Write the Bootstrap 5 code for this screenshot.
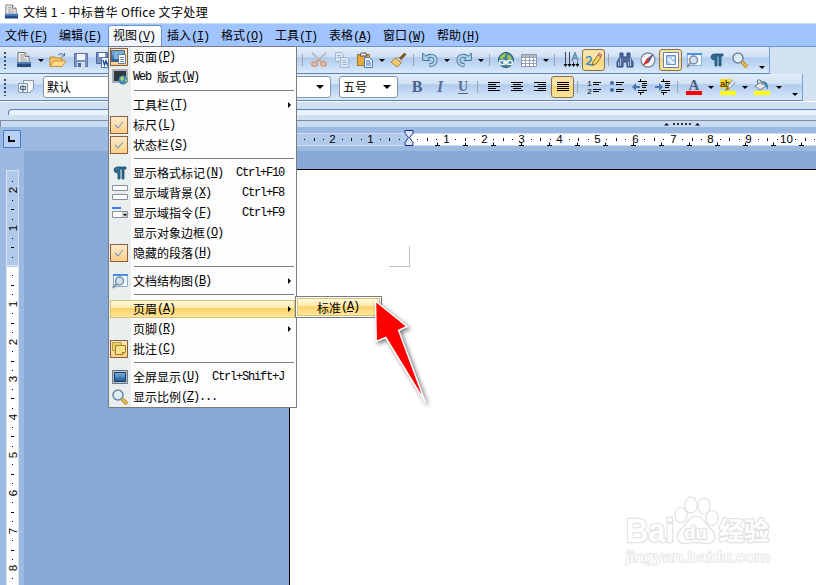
<!DOCTYPE html>
<html lang="zh-CN">
<head>
<meta charset="utf-8">
<title>文档 1 - 中标普华 Office 文字处理</title>
<link href="https://cdn.jsdelivr.net/npm/bootstrap@5.3.0/dist/css/bootstrap.min.css" rel="stylesheet">
<style>
body{width:816px;height:585px;overflow:hidden;background:#87a9d6;color:#000;font:12px/20px "Noto Sans CJK SC","Liberation Sans",sans-serif}
svg{display:block;flex:none}
.titlebar{height:23px;padding-left:4px;gap:4px;background:#fff;line-height:23px}
.titlebar span{white-space:pre;letter-spacing:.36px}
.lt{font-family:"Liberation Mono","Noto Sans CJK SC",monospace;font-size:12px;letter-spacing:-1.2px;white-space:pre}
.menubar{height:24px;background:#a0c4ff;border-top:1px solid #c8dcfa;border-bottom:1px solid #6f94cc;padding:1px 0 0 0}
.menubar .mi{padding:0 6px 0 5px;width:54px;height:22px;line-height:20px;white-space:nowrap}
.menubar .mi.open{background:linear-gradient(#fff,#e9f2fd);border:1px solid #6a93cf;border-bottom:0;border-radius:3px 3px 0 0;padding-left:4px;line-height:18px}
.bars{background:#d2e2f3}
.bar1,.bar2{height:27px;background:linear-gradient(#e3edf9 0,#d0e0f4 39%,#b0cbee 41%,#c0d7f3 65%,#dbeafc 100%);border-bottom:1px solid #5d83bd;border-right:1px solid #7ca0d4}
.bar1{width:770px}.bar2{width:803px}
.grip{width:12px;height:17px;flex:none;background:repeating-linear-gradient(#3c4f6e 0 2px,transparent 2px 4px) 4px 0/2px 100% no-repeat}
.bar2 .grip{width:14px}
.tb{width:23px;height:22px;flex:none;display:flex;align-items:center;justify-content:center}
.tb svg{overflow:visible}
.tb.on{border:1px solid #8c7048;border-radius:3px;background:linear-gradient(#f8dfa4,#fbe6b0 40%,#f8d27a 45%,#fbe598)}
.dd{width:11px;flex:none;display:flex;justify-content:center}
.dd:before,.combo:after{content:"";border:3px solid transparent;border-top-color:#000;border-bottom:0}
.combo:after{border-width:4px 4px 0;margin-left:auto}
.sp{width:8px;height:12px;flex:none;background:linear-gradient(#9ba3ad,#9ba3ad) 3px 0/1px 100% no-repeat}
.under{width:184px;flex:none}
.combo{height:22px;border:1px solid #8494ab;border-radius:3px;background:#fff;flex:none;padding:0 6px 0 3px}
.c1{width:288px;margin:0 8px 0 6px}.c2{width:59px;margin-right:7px}
.end{margin:14px 2px 0 auto}
.strip{height:20px;background:#cfe0f2;border-top:1px solid #fff;border-bottom:1px solid #7e8ba0;padding:7px 0 0 8px}
.tube{height:6px;border:1px solid #5f80b8;border-right:0;border-bottom:0;border-radius:4px 0 0 0;background:#eaf2fb}
.split{height:6px;background:#c9dcf1;border-left:1px solid #7e8ba0}
.work{height:458px}
.vr-pane{width:24px;flex:none;background:#9bb9e1}
.hr-top{height:24px;background:#9bb9e1}
.sheet{margin:18px 0 0 265px;height:420px;background:#fff;border-left:1px solid #000;border-top:1px solid #000}
.popmenu{position:absolute;left:108px;top:46px;width:189px;height:362px;border:1px solid #7b7b7b;background:linear-gradient(90deg,#e9eeee 22px,#fdfdfd 22px)}
.it{height:20px;padding:0 12px 0 0;flex:none;white-space:nowrap}
.ic{width:24px;height:18px;flex:none;display:flex;align-items:center;padding-left:3px}
.ic.on{width:18px;margin:0 5px 0 1px;padding:0;justify-content:center;border:1px solid #8b5f3f;background:linear-gradient(#fdebca,#ffcf82)}
.it .key{margin-left:auto}
.sub:after{content:"";border:3px solid transparent;border-left-color:#000;border-right:0;margin-left:auto;margin-right:-7px}
.rule{height:1px;flex:none;background:#7f7f7f;margin:3px 2px 4px 25px}
.hot{background:linear-gradient(#fff8d8,#fdeaad 45%,#fdd26a 47%,#ffe79a);border:1px solid #d9c37a}
.it.hot{margin:1px;width:185px;padding-right:10px;height:18px}
.it.hot .ic{width:22px}
.popsub{position:absolute;left:295px;top:296px;width:87px;height:22px;border:1px solid #7b7b7b;background:#fff;padding:1px}
.popsub .hot{height:18px;line-height:17px;padding-left:19px}
.over{position:absolute;left:0;top:0;pointer-events:none}
u{text-underline-offset:1px}
</style>
<script src="https://cdn.jsdelivr.net/npm/bootstrap@5.3.0/dist/js/bootstrap.bundle.min.js"></script>
</head>
<body class="position-relative">
<svg width="0" height="0" class="position-absolute">
<defs>
<linearGradient id="bl" x2="0" y2="1"><stop stop-color="#7fb4dc"/><stop offset="1" stop-color="#1d5794"/></linearGradient>
<symbol id="doc" viewBox="0 0 16 16"><path d="M2 .5h7l4 4V11H2z" fill="#f4f4f4" stroke="#777"/><path d="M9 .5v4h4" fill="#ddd" stroke="#777"/><path d="M4 3h4M4 5h4M4 7h7M4 9h7" stroke="#999"/><path d="M1 10h14v5H1z" fill="#234f86"/><path d="M1 10h14v2H1z" fill="#4d7cb3"/></symbol>
<symbol id="open" viewBox="0 0 18 16"><path d="M1 14V5h5l1 1h6v3" fill="#f3c56b" stroke="#c58a2a"/><path d="M1 14.500 5 9h12l-4 5.500z" fill="#ffdd8c" stroke="#cf9430"/><path d="M9 3q3-3 6 0m.5-2v3h-3" fill="none" stroke="#52749f"/></symbol>
<symbol id="save" viewBox="0 0 16 16"><path d="M1.500 1.500h13v13h-13z" fill="#7c93c0" stroke="#5d75a8"/><path d="M4 2h8v6H4z" fill="#f1f4fa"/><path d="M4 10h8v5H4z" fill="#d5dcea"/><path d="M5 11h3v4H5z" fill="#4c659b"/></symbol>
<symbol id="savew" viewBox="0 0 16 16"><path d="M.5.500h11v11H.500z" fill="#7d94c0" stroke="#4c659b"/><path d="M3 1h6v4H3z" fill="#fff"/><path d="M5.500 5.500h10v10h-10z" fill="#fff" stroke="#3f6cb4"/><path d="m7 8 1.500 5L10 9l1.500 4L14 7" fill="none" stroke="#244f9e" stroke-width="1.500"/></symbol>
<symbol id="cut" viewBox="0 0 16 16"><path d="m1 1 10 9M15 1 5 10" stroke="#b4bdc8" stroke-width="1.800"/><g fill="none" stroke="#d9a180" stroke-width="2"><ellipse cx="3.500" cy="12" rx="2.500" ry="2"/><ellipse cx="12.500" cy="12" rx="2.500" ry="2"/><path d="m5 10 3-2 3 2"/></g></symbol>
<symbol id="copy" viewBox="0 0 16 16"><g fill="#dbe7f6" stroke="#a3b6d2"><path d="M1.500.500h6l2 2v7h-8z"/><path d="M6.500 5.500h6l2 2v8h-8z"/><path d="M3 3.500h4m-4 2h4m1 3h4m-4 2h5m-5 2h5"/></g></symbol>
<symbol id="paste" viewBox="0 0 16 16"><path d="M.5 2.500h12v11H.500z" fill="#e5a83b" stroke="#a77525"/><path d="M4 1h5l1 3H3z" fill="#eee" stroke="#555"/><path d="M7.500 5.500h5l3 3v7h-8z" fill="#e3effc" stroke="#4c7dba"/><path d="M9 9h4m-4 2h5m-5 2h5" stroke="#4c7dba"/></symbol>
<symbol id="brush" viewBox="0 0 16 16"><path d="m14.500 1.500-6 6" stroke="#8a562c" stroke-width="3"/><path d="M7 5l4 4-1 2-5-5z" fill="#d9d9d9" stroke="#777" stroke-width=".6"/><path d="m5 6 5 5-4 4-6-5z" fill="#efcb74" stroke="#ad8132"/></symbol>
<symbol id="undo" viewBox="0 0 16 16"><g fill="none"><path d="M3.500 6.500c4-4.500 10-3 10 1.500 0 4-3 5-6 5" stroke="#40749c" stroke-width="4"/><path d="M.700 1v7.500H8L5.500 6 3.500 4z" fill="#b4d4e8" stroke="#40749c"/><path d="M3.500 6.500c4-4.500 10-3 10 1.500 0 4-3 5-5.500 5" stroke="#b4d4e8" stroke-width="2.200"/></g></symbol>
<symbol id="globe" viewBox="0 0 16 16"><circle cx="8" cy="8" r="7.500" fill="#3e83a0" stroke="#285d75"/><path d="M2 5q3-4 6-4l-1 4-4 3zM10 2l4 4-2 3-3-3z" fill="#9bc44e"/><g fill="none" stroke="#f4f4f4" stroke-width="1.600"><rect x="1.500" y="8.500" width="6" height="4" rx="2"/><rect x="8.500" y="8.500" width="6" height="4" rx="2"/><path d="M5 10.500h6"/></g></symbol>
<symbol id="table" viewBox="0 0 16 16"><path d="M.5 2.500h15v12H.500z" fill="#fff" stroke="#8a98aa"/><path d="M1 3h14v2H1z" fill="#b5c1d1"/><path d="M1 5.500h14m-14 3h14m-14 3h14M4.500 3v11M8.500 3v11M12.500 3v11" stroke="#94a2b3"/></symbol>
<symbol id="chars" viewBox="0 0 16 16"><path d="M2.500 0v13M6.500 0v13M10.500 10v3M14.500 10v3" stroke="#444"/><path d="m.5 12 2 3 2-3zm4 0 2 3 2-3zm4 0 2 3 2-3zm4 0 2 3 2-3z"/><path d="m9 9 3-8 3 8M10 6h4" fill="none" stroke="#6d93b2" stroke-width="1.800"/></symbol>
<symbol id="pencil" viewBox="0 0 18 16"><path d="M1 6q4-3 5 0t-4 6q4 1 7 1" fill="none" stroke="#3a8cc4" stroke-width="1.600"/><path d="m8 10 5-7 3 2-5 7-4 1z" fill="#f6d267" stroke="#7a5b22" stroke-width=".8"/><path d="m13 3 1-2 3 2-1 2z" fill="#e98985" stroke="#a05050" stroke-width=".6"/></symbol>
<symbol id="bino" viewBox="0 0 18 16"><path d="M4 1h3v4h4V1h3v4l3 5v5h-6v-5H7v5H1v-5l3-5z" fill="#526b9c" stroke="#334b78"/><path d="M2.500 10v4m2-8v8m8-4v4m2-8v8" stroke="#abc0e3"/></symbol>
<symbol id="compass" viewBox="0 0 16 16"><circle cx="8" cy="8" r="7" fill="#f3f6f8" stroke="#7d8b98" stroke-width="1.300"/><path d="m13.500 2-4 8-3-3z" fill="#1b60ce"/><path d="m13.500 2-7 5 1.500 1.500z" fill="#e0402c"/><path d="m2.500 14 4-7 3 3z" fill="#cf2e21"/></symbol>
<symbol id="image" viewBox="0 0 16 16"><path d="M.5.500h15v15H.500z" fill="#fff" stroke="#5d83b8"/><path d="M3.500 3.500h9v9h-9z" fill="#a9c5e8" stroke="#6a8fc2"/><path d="m4 7 2-1.500 6 5.500v1H8z" fill="#e4effb"/><circle cx="10" cy="6" r="1.200" fill="#fff"/></symbol>
<symbol id="find" viewBox="0 0 16 16"><path d="M1.500 1.500h14v12h-14z" fill="#f4faff" stroke="#86b0dd"/><path d="M1 1h15v2H1z" fill="#4a90e0"/><circle cx="7.500" cy="8" r="4" fill="#cfe2f3" stroke="#7d8b9a" stroke-width="1.500"/><path d="m4.500 11-3.500 4" stroke="#8a949e" stroke-width="2.200"/></symbol>
<symbol id="pil" viewBox="0 0 16 16"><path d="M14 2H6Q2 2 2 5t4 3v6h2V4h2v10h2V4h2z" fill="#2e6d94" stroke="#1a4d6c" stroke-width=".8"/></symbol>
<symbol id="mag" viewBox="0 0 16 16"><path d="m10 10 5 5" stroke="#a77519" stroke-width="3.500"/><path d="m10 10 5 5" stroke="#f1c34a" stroke-width="2"/><circle cx="6" cy="6" r="5" fill="#dcecf8" stroke="#70859a" stroke-width="1.500"/></symbol>
<symbol id="style" viewBox="0 0 16 16"><path d="M5.500 1.500h10v9l-4 3h-6z" fill="#f5f7fa" stroke="#8797ab"/><path d="M.5 4.500h9v9h-9z" fill="#e8eef6" stroke="#8797ab"/><path d="M2.500 7.500h5v3h-5zM5 6v7" fill="none" stroke="#4b5f7c"/></symbol>
<symbol id="al" viewBox="0 0 16 16"><path d="M2 3.500h12M2 5.500h8M2 7.500h12M2 9.500h8M2 11.500h12" stroke="#000"/></symbol>
<symbol id="ac" viewBox="0 0 16 16"><path d="M2 3.500h12M4 5.500h8M2 7.500h12M4 9.500h8M2 11.500h12" stroke="#000"/></symbol>
<symbol id="aj" viewBox="0 0 16 16"><path d="M2 3.500h12M2 5.500h12M2 7.500h12M2 9.500h12M2 11.500h12" stroke="#000"/></symbol>
<symbol id="dots" viewBox="0 0 16 16"><circle cx="3" cy="4" r="2" fill="#496b9e"/><circle cx="3" cy="11" r="2" fill="#496b9e"/><path d="M7 3.500h8M7 5.500h6M7 10.500h8M7 12.500h6" stroke="#000"/></symbol>
<symbol id="ind" viewBox="0 0 16 16"><path d="M6 2.500h9M10 4.500h5M10 6.500h5M10 8.500h4M6 11.500h9M6 13.500h6M8.500 0v2m0 12v2" stroke="#000"/><path d="m0 8 4-4v3h4v2H4v3z" fill="#4d75ae"/></symbol>
<symbol id="ind2" viewBox="0 0 16 16"><path d="M6 2.500h9M10 4.500h5M10 6.500h5M10 8.500h4M6 11.500h9M6 13.500h6M8.500 0v2m0 12v2" stroke="#000"/><path d="M8 8 4 4v3H0v2h4v3z" fill="#4d75ae"/></symbol>
<symbol id="chk" viewBox="0 0 16 16"><path d="m4 8 3 3 5-6" fill="none" stroke="#6e9bd2" stroke-width="1.100"/></symbol>
<symbol id="page" viewBox="0 0 16 16"><path d="M.5 1.500h13v11H.500z" fill="url(#bl)" stroke="#52657d"/><path d="M3 3h9v7H3z" fill="#79b2df"/><path d="M7.500 5.500h7v9h-7z" fill="#fff" stroke="#61809f"/><path d="M9 8.500h4m-4 2h4m-4 2h4" stroke="#6c94bb"/></symbol>
<symbol id="web" viewBox="0 0 16 16"><path d="M1 1h14v12H1z" fill="#30383f" stroke="#a8b0b8" stroke-width="2"/><circle cx="11" cy="11" r="4.500" fill="#3d87c2"/><path d="m8 9 3-2 1 3-2 3zM13 10l2 1-2 3z" fill="#b8d755"/></symbol>
<symbol id="scr" viewBox="0 0 16 16"><path d="M.5 1.500h15v13H.500z" fill="#bac3cd" stroke="#6f7882"/><path d="M2.500 3.500h11v9h-11z" fill="url(#bl)" stroke="#153b68"/></symbol>
<symbol id="fld" viewBox="0 0 16 16"><path d="M.5.500h15v5H.500zM.500 9.500h15v5H.500z" fill="#fff" stroke="#8a9198"/></symbol>
<symbol id="cmd" viewBox="0 0 16 16"><path d="M0 2h9v2H0z" fill="#2f7df0"/><path d="M.5 6.500h15v6H.500z" fill="#fff" stroke="#8a9198"/><path d="M10 7h5v5h-5z" fill="#ccc"/><path d="M11 9h4l-2 2z"/></symbol>
<symbol id="note" viewBox="0 0 16 16"><path d="M1.500 1.500h9v8h-9z" fill="#ecd46e" stroke="#bd9c3c"/><path d="M4.500 4.500h10v6l-3 3h-7z" fill="#f7e28a" stroke="#9b7d26"/><path d="M11 14v-3h4z" fill="#a98424"/></symbol>
</defs></svg>

<header class="titlebar d-flex align-items-center"><svg width="15" height="16"><use href="#doc"/></svg><span>文档 1 - 中标普华 Office 文字处理</span></header>
<nav class="menubar d-flex">
<div class="mi">文件<span class="lt">(<u>F</u>)</span></div><div class="mi">编辑<span class="lt">(<u>E</u>)</span></div><div class="mi open">视图<span class="lt">(<u>V</u>)</span></div><div class="mi">插入<span class="lt">(<u>I</u>)</span></div><div class="mi">格式<span class="lt">(<u>O</u>)</span></div><div class="mi">工具<span class="lt">(<u>T</u>)</span></div><div class="mi">表格<span class="lt">(<u>A</u>)</span></div><div class="mi">窗口<span class="lt">(<u>W</u>)</span></div><div class="mi">帮助<span class="lt">(<u>H</u>)</span></div>
</nav>
<div class="bars">
<div class="bar1 d-flex align-items-center">
<i class="grip"></i><div class="tb"><svg width="16" height="16"><use href="#doc"/></svg></div><i class="dd"></i>
<div class="tb"><svg width="18" height="16"><use href="#open"/></svg></div><div class="tb"><svg width="16" height="16"><use href="#save"/></svg></div><div class="tb"><svg width="16" height="16"><use href="#savew"/></svg></div>
<div class="under"></div><i class="sp"></i>
<div class="tb"><svg width="16" height="16"><use href="#cut"/></svg></div><div class="tb"><svg width="16" height="16"><use href="#copy"/></svg></div><div class="tb"><svg width="16" height="16"><use href="#paste"/></svg></div><i class="dd"></i><div class="tb"><svg width="16" height="16"><use href="#brush"/></svg></div><i class="sp"></i>
<div class="tb"><svg width="16" height="16"><use href="#undo"/></svg></div><i class="dd"></i><div class="tb"><svg width="16" height="16"><use href="#undo" transform="matrix(-1 0 0 1 16 0)"/></svg></div><i class="dd"></i><i class="sp"></i>
<div class="tb"><svg width="16" height="16"><use href="#globe"/></svg></div><div class="tb"><svg width="16" height="16"><use href="#table"/></svg></div><i class="dd"></i><i class="sp"></i>
<div class="tb"><svg width="16" height="16"><use href="#chars"/></svg></div><div class="tb on"><svg width="18" height="16"><use href="#pencil"/></svg></div><i class="sp"></i>
<div class="tb"><svg width="18" height="16"><use href="#bino"/></svg></div><div class="tb"><svg width="16" height="16"><use href="#compass"/></svg></div><div class="tb on"><svg width="16" height="16"><use href="#image"/></svg></div><div class="tb"><svg width="16" height="16"><use href="#find"/></svg></div><div class="tb"><svg width="16" height="16"><use href="#pil"/></svg></div><div class="tb"><svg width="16" height="16"><use href="#mag"/></svg></div><i class="dd end"></i>
</div>
<div class="bar2 d-flex align-items-center">
<i class="grip"></i><div class="tb me-0"><svg width="16" height="16"><use href="#style"/></svg></div>
<div class="combo c1 d-flex align-items-center">默认</div><div class="combo c2 d-flex align-items-center">五号</div>
<div class="tb"><svg width="20" height="20"><text x="10" y="15" text-anchor="middle" font-family="Liberation Serif" font-weight="700" font-size="16" fill="#4b5f8a">B</text></svg></div>
<div class="tb"><svg width="20" height="20"><text x="10" y="15" text-anchor="middle" font-family="Liberation Serif" font-weight="700" font-style="italic" font-size="16" fill="#5b6f99">I</text></svg></div>
<div class="tb"><svg width="20" height="20"><text x="10" y="14" text-anchor="middle" font-family="Liberation Serif" font-weight="700" font-size="14" fill="#5b6f99">U</text><path d="M5 16.500h10" stroke="#4b5f8a"/></svg></div><i class="sp"></i>
<div class="tb"><svg width="16" height="16"><use href="#al"/></svg></div><div class="tb"><svg width="16" height="16"><use href="#ac"/></svg></div><div class="tb"><svg width="16" height="16"><use href="#al" transform="matrix(-1 0 0 1 16 0)"/></svg></div><div class="tb on"><svg width="16" height="16"><use href="#aj"/></svg></div><i class="sp"></i>
<div class="tb"><svg width="16" height="16"><text x="1" y="7" font-family="Liberation Mono" font-size="8">1</text><text x="1" y="15" font-family="Liberation Mono" font-size="8">2</text><path d="M7 3.500h8M7 5.500h6M7 10.500h8M7 12.500h6" stroke="#000"/></svg></div><div class="tb"><svg width="16" height="16"><use href="#dots"/></svg></div><div class="tb"><svg width="16" height="16"><use href="#ind"/></svg></div><div class="tb"><svg width="16" height="16"><use href="#ind2"/></svg></div><i class="sp"></i>
<div class="tb"><svg width="16" height="20"><text x="8" y="13" text-anchor="middle" font-family="Liberation Serif" font-weight="700" font-size="15" fill="#4b5f8a">A</text><path d="M0 14h16v4H0z" fill="red"/></svg></div><i class="dd"></i>
<div class="tb"><svg width="16" height="20" viewBox="0 -2 16 20"><path d="M0 12h16v4H0z" fill="#ff0"/><path d="M0 0h11v9H0z" fill="#fbd62d"/><text x="0" y="8" font-family="Liberation Sans" font-size="9">ab</text><path d="m14 2-5 6" stroke="#8799ad" stroke-width="4"/><path d="m14 2-5 6" stroke="#e6edf5" stroke-width="2"/><path d="m7 7 3 3-5 2z" fill="#aa7b19"/></svg></div><i class="dd"></i>
<div class="tb"><svg width="16" height="20" viewBox="0 -2 16 20"><path d="M0 12h16v4H0z" fill="#ff0"/><path d="M8 2q7 0 6 9l-3-5z" fill="#3c83b2"/><path d="m1 7 6-4 5 4-6 4z" fill="#e6ebee" stroke="#697786"/><path d="M4 5q-2-5 2-4 3 1 2 5" fill="none" stroke="#596979"/></svg></div><i class="dd"></i><i class="dd end"></i>
</div>
</div>
<div class="strip"><div class="tube"></div></div>
<div class="split"></div>
<main class="work d-flex"><div class="vr-pane"><svg id="vruler" width="24" height="458"></svg></div>
<div class="flex-grow-1"><div class="hr-top"><svg id="hruler" width="792" height="24"></svg></div>
<div class="sheet"><svg width="200" height="110"><path d="M99 96.500h21M119.500 76v21" stroke="#c0c0c0"/></svg></div></div></main>

<div class="popmenu d-flex flex-column">
<div class="it d-flex align-items-center"><i class="ic on"><svg width="16" height="16"><use href="#page"/></svg></i>页面<span class="lt">(<u>P</u>)</span></div>
<div class="it d-flex align-items-center"><i class="ic"><svg width="16" height="16"><use href="#web"/></svg></i><span class="lt">Web </span>版式<span class="lt">(<u>W</u>)</span></div>
<div class="rule"></div>
<div class="it sub d-flex align-items-center"><i class="ic"></i>工具栏<span class="lt">(<u>T</u>)</span></div>
<div class="it d-flex align-items-center"><i class="ic on"><svg width="16" height="16"><use href="#chk"/></svg></i>标尺<span class="lt">(<u>L</u>)</span></div>
<div class="it d-flex align-items-center"><i class="ic on"><svg width="16" height="16"><use href="#chk"/></svg></i>状态栏<span class="lt">(<u>S</u>)</span></div>
<div class="rule"></div>
<div class="it d-flex align-items-center"><i class="ic"><svg width="16" height="16"><use href="#pil"/></svg></i>显示格式标记<span class="lt">(<u>N</u>)</span><span class="lt key">Ctrl+F10</span></div>
<div class="it d-flex align-items-center"><i class="ic"><svg width="16" height="16"><use href="#fld"/></svg></i>显示域背景<span class="lt">(<u>X</u>)</span><span class="lt key">Ctrl+F8</span></div>
<div class="it d-flex align-items-center"><i class="ic"><svg width="16" height="16"><use href="#cmd"/></svg></i>显示域指令<span class="lt">(<u>F</u>)</span><span class="lt key">Ctrl+F9</span></div>
<div class="it d-flex align-items-center"><i class="ic"></i>显示对象边框<span class="lt">(<u>O</u>)</span></div>
<div class="it d-flex align-items-center"><i class="ic on"><svg width="16" height="16"><use href="#chk"/></svg></i>隐藏的段落<span class="lt">(<u>H</u>)</span></div>
<div class="rule"></div>
<div class="it sub d-flex align-items-center"><i class="ic"><svg width="16" height="16"><use href="#find"/></svg></i>文档结构图<span class="lt">(<u>B</u>)</span></div>
<div class="rule"></div>
<div class="it sub hot d-flex align-items-center"><i class="ic"></i>页眉<span class="lt">(<u>A</u>)</span></div>
<div class="it sub d-flex align-items-center"><i class="ic"></i>页脚<span class="lt">(<u>R</u>)</span></div>
<div class="it d-flex align-items-center"><i class="ic on"><svg width="16" height="16"><use href="#note"/></svg></i>批注<span class="lt">(<u>C</u>)</span></div>
<div class="rule"></div>
<div class="it d-flex align-items-center"><i class="ic"><svg width="16" height="16"><use href="#scr"/></svg></i>全屏显示<span class="lt">(<u>U</u>)</span><span class="lt key">Ctrl+Shift+J</span></div>
<div class="it d-flex align-items-center"><i class="ic"><svg width="16" height="16"><use href="#mag"/></svg></i>显示比例<span class="lt">(<u>Z</u>)...</span></div>
</div>
<div class="popsub"><div class="hot d-flex align-items-center">标准<span class="lt">(<u>A</u>)</span></div></div>

<svg class="over" width="816" height="585">
<path d="m664 125.500 2.500-2.500 2.500 2.500zm31 0 2.500-2.500 2.500 2.500z"/><path d="M673 124h19" stroke="#333" stroke-width="2" stroke-dasharray="2 2"/>
<g fill="#fff" stroke="#e2e2e2" stroke-width="1.500" stroke-linejoin="round" paint-order="stroke">
<g stroke-width="2.500"><text x="626" y="542" font-family="Liberation Sans" font-weight="700" font-size="33" textLength="48" lengthAdjust="spacingAndGlyphs">Bai</text>
<ellipse cx="681" cy="515" rx="5.500" ry="7"/><ellipse cx="691" cy="505" rx="5.500" ry="7.500"/><ellipse cx="704" cy="506" rx="5.500" ry="7.500"/><ellipse cx="712" cy="518" rx="5.500" ry="7"/><path d="M696 517c7 0 9 8 15 13 6 6 3 14-5 13q-10-2-20 0c-8 1-11-7-5-13 6-5 8-13 15-13z"/>
<text x="684" y="539" font-family="Liberation Sans" font-weight="700" font-size="19" textLength="23">du</text>
<text x="719" y="540" font-family="Noto Sans CJK SC" font-weight="700" font-size="25" textLength="50">经验</text></g>
<text x="626" y="562" font-family="Liberation Sans" font-size="15.500" textLength="144" lengthAdjust="spacingAndGlyphs">jingyan.baidu.com</text></g>
<path d="M375.500 301l31.500 25.500-8.300 4 26.700 72-39.700-65-9.500 4z" fill="red" stroke="#fff" stroke-width="1.500" style="filter:drop-shadow(2px 2px 2px #0008)"/>
</svg>
<script>
// Rulers: one unit is 37.8 px; each holds a half tick and two quarter dots.
const CM = 37.8;
function marks(from, to, zero, draw) {
  for (let q = Math.ceil((from - zero) / (CM / 4)); zero + q * CM / 4 < to; q++)
    if (q) draw(Math.round(zero + q * CM / 4), q % 4 === 0 ? 'n' : q % 2 === 0 ? 't' : 'd', Math.abs(q / 4));
}
const font = 'font-family="Liberation Sans" font-size="11.5" text-anchor="middle"';
let h = '<path d="M272 6.500h520v12H272z" fill="#b1c9ea"/><path d="M385 7h407v11H385z" fill="#fff"/><path d="M272 18.500h520M272 6.500h520" stroke="#d3e0f3"/>';
marks(272, 792, 384, (x, k, n) => {
  h += k === 'n' ? `<text x="${x + .5}" y="16" ${font}>${n}</text>` : `<path d="M${x + .5} ${k === 't' ? '11v3' : '12v1'}" stroke="#000"/>`;
});
for (let x = 413; x < 792; x += 28) h += `<path d="M${x - 2} 18.500h5m-2.500-3v3" stroke="#000" fill="none"/>`;
h += '<path d="M381 3.500h8v3l-3.500 4 3.500 5v3h-8v-3l3.500-5-3.500-4z" fill="#dce6f8" stroke="#1b2a86"/>';
hruler.innerHTML = h;
let v = '<path d="M3.500 3.500h17v17h-17z" fill="#b8d0f2" stroke="#4774cc"/><path d="M9 9v5h6" fill="none" stroke="#000" stroke-width="2"/><path d="M6.500 43.500h12v420h-12z" fill="#b1c9ea" stroke="#dfe0ee"/><path d="M7 140h11v318H7z" fill="#fff"/><path d="M7 138.500h12" stroke="#dfe0ee"/>';
marks(45, 460, 139, (y, k, n) => {
  v += k === 'n' ? `<text transform="translate(17 ${y}) rotate(-90)" ${font}>${n}</text>` : `<path d="M${k === 't' ? '11' : '12'} ${y + .5}h${k === 't' ? 3 : 1}" stroke="#000"/>`;
});
vruler.innerHTML = v;
</script>
</body>
</html>
